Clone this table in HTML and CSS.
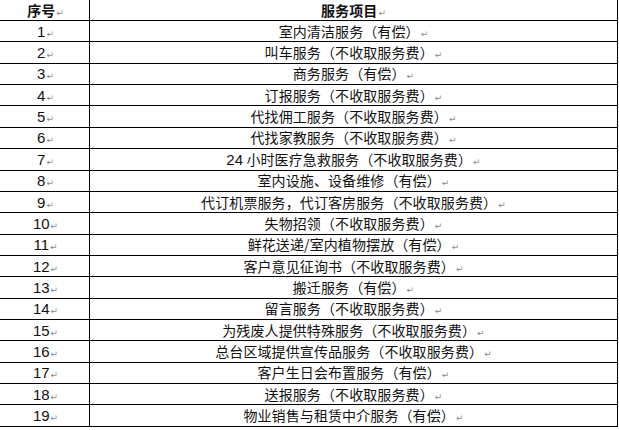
FILE: index.html
```html
<!DOCTYPE html>
<html lang="zh">
<head>
<meta charset="utf-8">
<link rel="stylesheet" href="styles.css">
</head>
<body>
<div class="table">
  <div class="cell num head"><span>序号<span class="pm">↵</span></span></div>
  <div class="cell item head"><span>服务项目<span class="pm">↵</span></span></div>
  <div class="cell num"><span>1<span class="pm">↵</span></span></div><div class="cell item"><span>室内清洁服务（有偿）<span class="pm">↵</span></span></div>
  <div class="cell num"><span>2<span class="pm">↵</span></span></div><div class="cell item"><span>叫车服务（不收取服务费）<span class="pm">↵</span></span></div>
  <div class="cell num"><span>3<span class="pm">↵</span></span></div><div class="cell item"><span>商务服务（有偿）<span class="pm">↵</span></span></div>
  <div class="cell num"><span>4<span class="pm">↵</span></span></div><div class="cell item"><span>订报服务（不收取服务费）<span class="pm">↵</span></span></div>
  <div class="cell num"><span>5<span class="pm">↵</span></span></div><div class="cell item"><span>代找佣工服务（不收取服务费）<span class="pm">↵</span></span></div>
  <div class="cell num"><span>6<span class="pm">↵</span></span></div><div class="cell item"><span>代找家教服务（不收取服务费）<span class="pm">↵</span></span></div>
  <div class="cell num"><span>7<span class="pm">↵</span></span></div><div class="cell item"><span><span class="lat">24</span> 小时医疗急救服务（不收取服务费）<span class="pm">↵</span></span></div>
  <div class="cell num"><span>8<span class="pm">↵</span></span></div><div class="cell item"><span>室内设施、设备维修（有偿）<span class="pm">↵</span></span></div>
  <div class="cell num"><span>9<span class="pm">↵</span></span></div><div class="cell item"><span>代订机票服务，代订客房服务（不收取服务费）<span class="pm">↵</span></span></div>
  <div class="cell num"><span>10<span class="pm">↵</span></span></div><div class="cell item"><span>失物招领（不收取服务费）<span class="pm">↵</span></span></div>
  <div class="cell num"><span>11<span class="pm">↵</span></span></div><div class="cell item"><span>鲜花送递/室内植物摆放（有偿）<span class="pm">↵</span></span></div>
  <div class="cell num"><span>12<span class="pm">↵</span></span></div><div class="cell item"><span>客户意见征询书（不收取服务费）<span class="pm">↵</span></span></div>
  <div class="cell num"><span>13<span class="pm">↵</span></span></div><div class="cell item"><span>搬迁服务（有偿）<span class="pm">↵</span></span></div>
  <div class="cell num"><span>14<span class="pm">↵</span></span></div><div class="cell item"><span>留言服务（不收取服务费）<span class="pm">↵</span></span></div>
  <div class="cell num"><span>15<span class="pm">↵</span></span></div><div class="cell item"><span>为残废人提供特殊服务（不收取服务费）<span class="pm">↵</span></span></div>
  <div class="cell num"><span>16<span class="pm">↵</span></span></div><div class="cell item"><span>总台区域提供宣传品服务（不收取服务费）<span class="pm">↵</span></span></div>
  <div class="cell num"><span>17<span class="pm">↵</span></span></div><div class="cell item"><span>客户生日会布置服务（有偿）<span class="pm">↵</span></span></div>
  <div class="cell num"><span>18<span class="pm">↵</span></span></div><div class="cell item"><span>送报服务（不收取服务费）<span class="pm">↵</span></span></div>
  <div class="cell num"><span>19<span class="pm">↵</span></span></div><div class="cell item"><span>物业销售与租赁中介服务（有偿）<span class="pm">↵</span></span></div>
</div>
</body>
</html>
```
FILE: styles.css
```css
html, body {
  margin: 0;
  padding: 0;
  background: #fff;
}
body {
  font-family: "Noto Sans CJK SC", "Liberation Sans", sans-serif;
  color: #111;
}
.table {
  position: relative;
  display: grid;
  grid-template-columns: 90px 528px;
  grid-template-rows: 21px;
  grid-auto-rows: 21.37px;
  width: 618px;
}
.table::after {
  content: "";
  position: absolute;
  right: 0;
  bottom: -4px;
  width: 1px;
  height: 4px;
  background: #000;
}
.cell {
  box-sizing: border-box;
  border-bottom: 1px solid #000;
  border-right: 1px solid #000;
  display: flex;
  align-items: center;
  justify-content: center;
  white-space: nowrap;
  line-height: 1;
}
.num {
  font-family: "Liberation Sans", sans-serif;
  font-size: 15px;
  padding-left: 2px;
}
.item {
  font-size: 14px;
  letter-spacing: 0.1px;
}
.head {
  font-family: "Noto Sans CJK SC", sans-serif;
  font-weight: bold;
  font-size: 14px;
}
.lat {
  font-family: "Liberation Sans", sans-serif;
  font-size: 15px;
}
.pm {
  font-family: "DejaVu Sans", sans-serif;
  font-weight: normal;
  font-size: 9px;
  color: #8a8a8a;
  margin-left: 1px;
}
```
